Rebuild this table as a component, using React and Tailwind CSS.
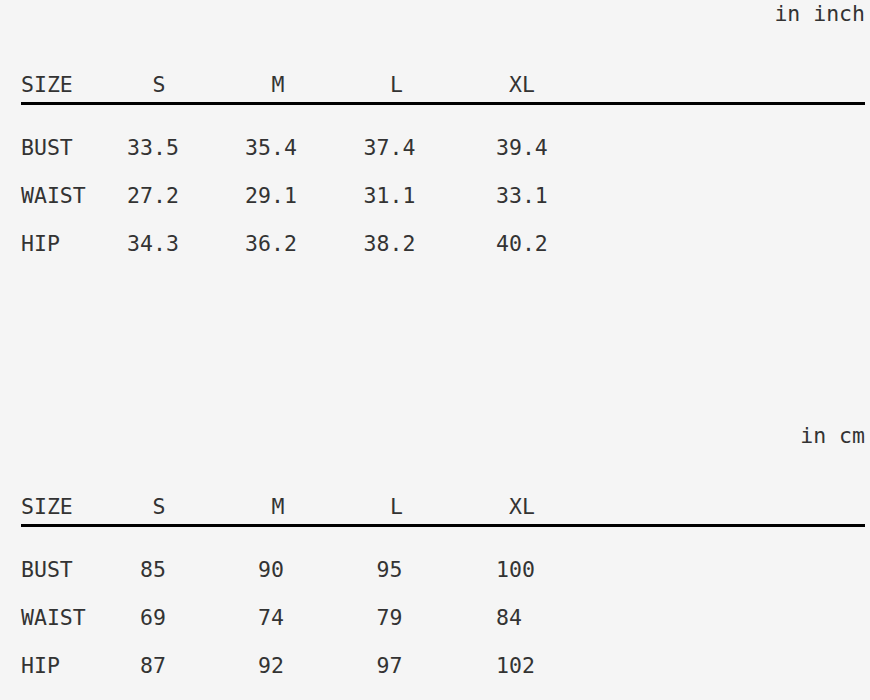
const inch = {
  unit: 'in inch',
  rows: [
    ['BUST', '33.5', '35.4', '37.4', '39.4'],
    ['WAIST', '27.2', '29.1', '31.1', '33.1'],
    ['HIP', '34.3', '36.2', '38.2', '40.2'],
  ],
};

const cm = {
  unit: 'in cm',
  rows: [
    ['BUST', '85', '90', '95', '100'],
    ['WAIST', '69', '74', '79', '84'],
    ['HIP', '87', '92', '97', '102'],
  ],
};

function SizeTable({ unit, rows }) {
  return (
    <div>
      <div className="h-[27px] leading-[27px] text-right">{unit}</div>

      {/* header */}
      <div className="mt-[41px] flex h-[34px] leading-[34px]">
        <div className="w-[73px]">SIZE</div>
        <div className="w-[118px] pl-[12px] text-center">S</div>
        <div className="w-[118px] pl-[14px] text-center">M</div>
        <div className="w-[119px] pl-[14px] text-center">L</div>
        <div className="flex-1 pl-[47px]">
          <div className="w-[52px] text-center">XL</div>
        </div>
      </div>
      <div className="h-[3px] bg-black" />

      {/* rows */}
      <div className="mt-[19px]">
        {rows.map(([label, s, m, l, xl]) => (
          <div key={label} className="flex h-[48px] leading-[48px]">
            <div className="w-[73px]">{label}</div>
            <div className="w-[118px] text-center">{s}</div>
            <div className="w-[118px] text-center">{m}</div>
            <div className="w-[119px] text-center">{l}</div>
            <div className="flex-1 pl-[47px]">{xl}</div>
          </div>
        ))}
      </div>
    </div>
  );
}

export default function App() {
  return (
    <div className="min-h-screen bg-[#f5f5f5] pl-[21px] pr-[5px] text-[21.5px] text-[#333] font-['DejaVu_Sans_Mono',monospace]">
      <SizeTable {...inch} />
      <div className="mt-[154px]">
        <SizeTable {...cm} />
      </div>
    </div>
  );
}
